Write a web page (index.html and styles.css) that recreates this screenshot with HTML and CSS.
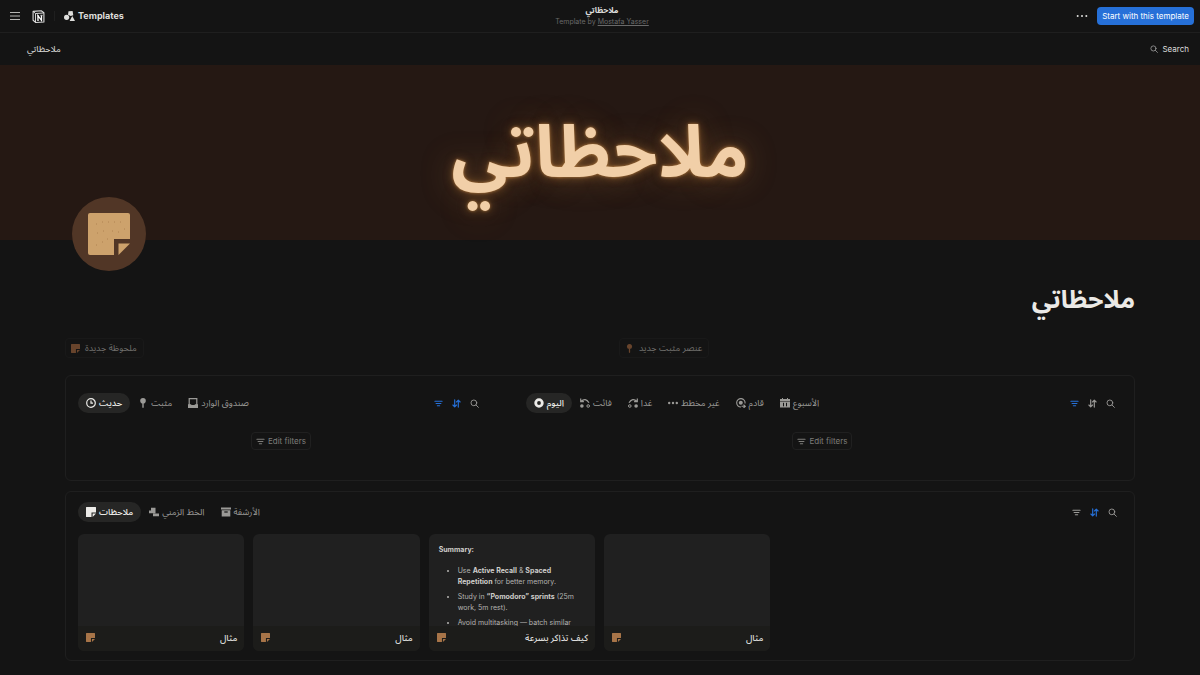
FILE: index.html
```
<!DOCTYPE html>
<html lang="en">
<head>
    <meta charset="UTF-8">
    <meta name="viewport" content="width=device-width, initial-scale=1.0">
    <title>ملاحظاتي</title>
    <link rel="stylesheet" href="styles.css">
</head>
<body>

    <!-- Shared icons -->
    <svg class="sprite" aria-hidden="true">
        <symbol id="i-note" viewBox="0 0 10 10"><path d="M.5 0h9q.5 0 .5.500V5.500H5.500v4.500H.5Q0 10 0 9.500v-9Q0 0 .5 0zM6.600 6.600H10L6.600 10z"/></symbol>
        <symbol id="i-pin" viewBox="0 0 10 10"><circle cx="5" cy="2.800" r="2.800"/><path d="M4.300 5h1.400v4.500L5 10l-.7-.5z"/></symbol>
        <symbol id="i-filter" viewBox="0 0 10 10"><path d="M1 2.500h8M2.300 5h5.400M3.700 7.500h2.600" fill="none" stroke="currentColor" stroke-width="1.200" stroke-linecap="round"/></symbol>
        <symbol id="i-sort" viewBox="0 0 10 10"><path d="M3 1v7.500M1 6.700l2 2 2-2M7 9V1.500M5 3.300l2-2 2 2" fill="none" stroke="currentColor" stroke-width="1.300" stroke-linecap="round" stroke-linejoin="round"/></symbol>
        <symbol id="i-search" viewBox="0 0 10 10"><path d="M7.500 4.300a3.200 3.200 0 1 1-6.400 0 3.200 3.200 0 0 1 6.400 0zM6.700 6.700L9.300 9.300" fill="none" stroke="currentColor" stroke-linecap="round"/></symbol>
    </svg>

    <header class="topbar">
        <div class="topbar-left">
            <button class="icon-btn" aria-label="Menu">
                <svg class="icon-menu" viewBox="0 0 10 8"><path d="M0 .5h10M0 4h10M0 7.500h10" fill="none" stroke="currentColor" stroke-width=".8"/></svg>
            </button>
            <a class="brand" href="#" aria-label="Home">
                <svg class="icon-brand" viewBox="0 0 24 24">
                    <path d="M2 2.500L17 1.500l5 3.500v17l-15 1-5-4z" fill="#141414" stroke="#dcdcdc" stroke-width="2" stroke-linejoin="round"/>
                    <path d="M2 2.500L6.500 6.500 22 5.500M6.500 6.500V23" fill="none" stroke="#dcdcdc" stroke-width="1.800"/>
                    <path d="M11 19v-8.500l6.500 8.500v-9" fill="none" stroke="#fff" stroke-width="2.400"/>
                    <path d="M9.500 10.500h3M15.500 9.800h4M9.500 19.300h3.200" fill="none" stroke="#fff" stroke-width="1.400"/>
                </svg>
            </a>
            <span class="divider"></span>
            <a class="templates" href="#">
                <svg class="icon-shapes" viewBox="0 0 11 10"><path d="M4.500.3L8.600 0l.7 4.200-2.600.9L4 3.800z"/><circle cx="2.600" cy="6.300" r="2.600"/><path d="M8.300 5l2.700 5H5.600z"/></svg>
                Templates
            </a>
        </div>
        <div class="topbar-title">
            <div class="doc-name">ملاحظاتي</div>
            <div class="doc-author">Template by <a href="#">Mostafa Yasser</a></div>
        </div>
        <div class="topbar-right">
            <button class="icon-btn" aria-label="More">
                <svg class="icon-dots" viewBox="0 0 12 10"><circle cx="1.700" cy="5" r="1"/><circle cx="6" cy="5" r="1"/><circle cx="10.300" cy="5" r="1"/></svg>
            </button>
            <button class="start-btn">Start with this template</button>
        </div>
    </header>

    <nav class="crumbs">
        <a href="#">ملاحظاتي</a>
        <button class="search-btn"><svg class="icon-small"><use href="#i-search"/></svg>Search</button>
    </nav>

    <div class="cover" lang="ar">ملاحظاتي</div>

    <main class="page">
        <div class="page-icon">
            <svg class="icon-page" viewBox="0 0 42 42">
                <path d="M2 0h38q2 0 2 2v24H26v16H2q-2 0-2-2V2q0-2 2-2z"/>
                <path d="M30.500 30.500H42L30.500 42z"/>
                <path class="specks" d="M8 11h.8M14 9h.8M20 9h.8M26 9h.8M32 9h.8M9 20h.8M15 18h.8M24 18h.8M30 19h.8M36 16h.8M14 29h.8M19 26h.8M8 32h.8"/>
            </svg>
        </div>

        <h1 class="title" dir="rtl" lang="ar">ملاحظاتي</h1>

        <div class="actions">
            <div><button class="action-btn"><svg class="icon-tool brown"><use href="#i-note"/></svg>ملحوظة جديدة</button></div>
            <div><button class="action-btn"><svg class="icon-tool brown"><use href="#i-pin"/></svg>عنصر مثبت جديد</button></div>
        </div>

        <section class="panel panel-split">
            <div class="view">
                <div class="view-bar">
                    <div class="tabs">
                        <button class="tab active"><svg class="icon-tab" viewBox="0 0 10 10"><path d="M9.300 5A4.300 4.300 0 1 1 .7 5a4.300 4.300 0 0 1 8.600 0zM5 2.500V5.200h2" fill="none" stroke="currentColor" stroke-width="1.200"/></svg>حديث</button>
                        <button class="tab"><svg class="icon-tab" viewBox="0 0 10 10"><use href="#i-pin"/></svg>مثبت</button>
                        <button class="tab"><svg class="icon-tab" viewBox="0 0 10 10"><path d="M1.200.7h7.600v7H1.200z" fill="none" stroke="currentColor" stroke-width="1.200"/><path d="M0 6.300h3l1 1.400h2l1-1.400h3V10H0z"/></svg>صندوق الوارد</button>
                    </div>
                    <div class="tools">
                        <button class="icon-btn blue" aria-label="Filter"><svg class="icon-tool"><use href="#i-filter"/></svg></button>
                        <button class="icon-btn blue" aria-label="Sort"><svg class="icon-tool"><use href="#i-sort"/></svg></button>
                        <button class="icon-btn" aria-label="Search"><svg class="icon-tool"><use href="#i-search"/></svg></button>
                    </div>
                </div>
                <button class="edit-btn"><svg class="icon-tool"><use href="#i-filter"/></svg>Edit filters</button>
            </div>
            <div class="view">
                <div class="view-bar">
                    <div class="tabs">
                        <button class="tab active"><svg class="icon-tab" viewBox="0 0 10 10"><circle cx="5" cy="5" r="3.300" fill="none" stroke="currentColor" stroke-width="2.800"/></svg>اليوم</button>
                        <button class="tab"><svg class="icon-tab" viewBox="0 0 10 10"><path d="M1 3.500Q5.500-1 9 4.800M.7.500v3.200h3.200" fill="none" stroke="currentColor" stroke-width="1.200"/><circle cx="1.900" cy="8" r="1.800"/><circle cx="8.200" cy="8" r="1.300" fill="none" stroke="currentColor"/></svg>فائت</button>
                        <button class="tab"><svg class="icon-tab" viewBox="0 0 10 10"><path d="M9 3.500Q4.500-1 1 4.800M9.300.5v3.200H6.100" fill="none" stroke="currentColor" stroke-width="1.200"/><circle cx="8.100" cy="8" r="1.800"/><circle cx="1.800" cy="8" r="1.300" fill="none" stroke="currentColor"/></svg>غدا</button>
                        <button class="tab"><svg class="icon-tab" viewBox="0 0 10 10"><circle cx="1.200" cy="5" r="1.200"/><circle cx="5" cy="5" r="1.200"/><circle cx="8.800" cy="5" r="1.200"/></svg>غير مخطط</button>
                        <button class="tab"><svg class="icon-tab" viewBox="0 0 10 10"><path d="M9 5.500A4.200 4.200 0 1 0 5 9M5.500 8.300H9M7.500 6.600l1.800 1.700L7.500 10" fill="none" stroke="currentColor" stroke-width="1.100"/><circle cx="4.800" cy="4.800" r="2"/></svg>قادم</button>
                        <button class="tab"><svg class="icon-tab" viewBox="0 0 10 10"><path d="M0 1h2V0h1v1h4V0h1v1h2v2H0zM0 3.600h10V9.500H0z"/><path d="M3.500 4.800v3.500M6.500 4.800v3.500" fill="none" stroke="#141414"/></svg>الأسبوع</button>
                    </div>
                    <div class="tools">
                        <button class="icon-btn blue" aria-label="Filter"><svg class="icon-tool"><use href="#i-filter"/></svg></button>
                        <button class="icon-btn" aria-label="Sort"><svg class="icon-tool"><use href="#i-sort"/></svg></button>
                        <button class="icon-btn" aria-label="Search"><svg class="icon-tool"><use href="#i-search"/></svg></button>
                    </div>
                </div>
                <button class="edit-btn"><svg class="icon-tool"><use href="#i-filter"/></svg>Edit filters</button>
            </div>
        </section>

        <section class="panel panel-notes">
            <div class="view-bar">
                <div class="tabs">
                    <button class="tab active"><svg class="icon-tab"><use href="#i-note"/></svg>ملاحظات</button>
                    <button class="tab"><svg class="icon-tab" viewBox="0 0 10 10"><path d="M2 .8h4.500v2.700H2zM0 3.500h6.500v2.700H0zM4 6.500h6v2.700H4z"/></svg>الخط الزمني</button>
                    <button class="tab"><svg class="icon-tab" viewBox="0 0 10 10"><path d="M0 .5h10v2H0zM.7 3.300h8.600v6.200H.7z"/><path d="M3.300 5h3.400" stroke="#141414" stroke-width="1.200"/></svg>الأرشفة</button>
                </div>
                <div class="tools">
                    <button class="icon-btn" aria-label="Filter"><svg class="icon-tool"><use href="#i-filter"/></svg></button>
                    <button class="icon-btn blue" aria-label="Sort"><svg class="icon-tool"><use href="#i-sort"/></svg></button>
                    <button class="icon-btn" aria-label="Search"><svg class="icon-tool"><use href="#i-search"/></svg></button>
                </div>
            </div>
            <div class="cards">
                <article class="card">
                    <div class="preview"></div>
                    <div class="card-foot"><svg class="icon-tool copper"><use href="#i-note"/></svg><span>مثال</span></div>
                </article>
                <article class="card">
                    <div class="preview"></div>
                    <div class="card-foot"><svg class="icon-tool copper"><use href="#i-note"/></svg><span>مثال</span></div>
                </article>
                <article class="card">
                    <div class="preview">
                        <p><b>Summary:</b></p>
                        <ul>
                            <li>Use <b>Active Recall</b> &amp; <b>Spaced Repetition</b> for better memory.</li>
                            <li>Study in <b>“Pomodoro” sprints</b> (25m work, 5m rest).</li>
                            <li>Avoid multitasking — batch similar</li>
                        </ul>
                    </div>
                    <div class="card-foot"><svg class="icon-tool copper"><use href="#i-note"/></svg><span>كيف تذاكر بسرعة</span></div>
                </article>
                <article class="card">
                    <div class="preview"></div>
                    <div class="card-foot"><svg class="icon-tool copper"><use href="#i-note"/></svg><span>مثال</span></div>
                </article>
            </div>
        </section>
    </main>

</body>
</html>
```
FILE: styles.css
```
* {
    box-sizing: border-box;
}
body {
    margin: 0;
    background: #141414;
    color: #dededc;
    font-family: Inter, "Noto Sans Arabic", "DejaVu Sans", sans-serif;
    font-size: 8px;
    line-height: 12px;
}
button {
    display: inline-flex;
    align-items: center;
    padding: 0;
    border: none;
    background: none;
    color: inherit;
    font: inherit;
    white-space: nowrap;
    cursor: pointer;
}
a {
    color: inherit;
    text-decoration: none;
}
svg {
    display: block;
    flex: none;
    fill: currentColor;
}
.sprite {
    position: absolute;
    width: 0;
    height: 0;
}

/* Top bar */
.topbar {
    display: grid;
    grid-template-columns: 1fr auto 1fr;
    align-items: center;
    height: 33px;
    padding: 0 6px 0 10px;
    border-bottom: 1px solid #1f1f1f;
}
.topbar-left,
.topbar-right {
    display: flex;
    align-items: center;
}
.topbar-right {
    justify-content: flex-end;
    gap: 9px;
}
.icon-menu {
    width: 10px;
    height: 8px;
}
.icon-brand {
    width: 13px;
    height: 13px;
    margin-left: 12px;
}
.divider {
    width: 1px;
    height: 10px;
    margin: 0 9px;
    background: #1f1f1f;
}
.templates {
    display: flex;
    align-items: center;
    gap: 3px;
    font-size: 9px;
    font-weight: bold;
}
.icon-shapes {
    width: 11px;
    height: 10px;
}
.icon-dots {
    width: 12px;
    height: 10px;
}
.topbar-title {
    text-align: center;
}
.doc-name {
    font-weight: bold;
}
.doc-author {
    color: #696969;
    font-size: 7px;
}
.doc-author a {
    text-decoration: underline;
}
.start-btn {
    height: 18px;
    padding: 0 5px;
    border-radius: 4px;
    background: #2670d8;
    color: #fff;
}

/* Breadcrumbs */
.crumbs {
    display: flex;
    align-items: center;
    justify-content: space-between;
    height: 32px;
    padding: 0 11px 0 27px;
}
.crumbs a {
    font-size: 9px;
}
.search-btn {
    gap: 4px;
}
.icon-small {
    width: 8px;
    height: 8px;
    color: #a0a0a0;
}

/* Cover with the glowing name */
.cover {
    display: flex;
    align-items: center;
    justify-content: center;
    height: 175px;
    padding-bottom: 4px;
    background: #251813;
    color: #f1cfa8;
    font-size: 72px;
    font-weight: bold;
    line-height: 80px;
    text-shadow: 0 0 3px #b07a40, 0 0 10px rgba(190, 125, 60, 0.5), 0 0 32px rgba(190, 125, 60, 0.4);
}

/* Page */
.page {
    padding: 0 65px 14px;
}
.page-icon {
    position: relative;
    display: flex;
    align-items: center;
    justify-content: center;
    width: 74px;
    height: 74px;
    margin: -43px 0 0 7px;
    border-radius: 50%;
    background: #513626;
    color: #cda26c;
}
.icon-page {
    width: 42px;
    height: 42px;
}
.specks {
    fill: none;
    stroke: #a97c4c;
    stroke-width: 1;
}
.title {
    margin: 8px 0 19px;
    color: #ebe9e6;
    font-size: 25px;
    line-height: 40px;
}
.actions {
    display: grid;
    grid-template-columns: 1fr 1fr;
    gap: 38px;
}
.action-btn {
    gap: 5px;
    height: 20px;
    padding: 0 6px 0 5px;
    border: 1px solid #191919;
    border-radius: 4px;
    color: #72716e;
    font-size: 9px;
}
.actions > div {
    display: flex;
}
.icon-tab {
    width: 10px;
    height: 10px;
}
.icon-tool {
    width: 9px;
    height: 9px;
}
.brown {
    color: #68442c;
}
.copper {
    color: #a77448;
}

/* Panels */
.panel {
    border: 1px solid #1f1f1f;
    border-radius: 6px;
}
.panel-split {
    display: grid;
    grid-template-columns: 13fr 19fr;
    gap: 42px;
    margin-top: 17px;
    padding: 17px 15px 30px 12px;
}
.panel-notes {
    margin-top: 10px;
    padding: 10px 13px 9px 12px;
}
.view {
    display: flex;
    flex-direction: column;
    align-items: center;
    gap: 19px;
}
.view-bar {
    display: flex;
    align-items: center;
    justify-content: space-between;
    width: 100%;
}
.tabs,
.tools {
    display: flex;
}
.tab {
    gap: 3px;
    height: 20px;
    padding: 0 8px;
    border-radius: 10px;
    color: #9b9a97;
    font-size: 9px;
}
.tab.active {
    background: #262625;
    color: #ecebe8;
    font-weight: 500;
}
.tools {
    color: #9b9a97;
}
.tools .icon-btn {
    justify-content: center;
    width: 18px;
    height: 18px;
}
.tools .blue {
    color: #2670d8;
}
.edit-btn {
    gap: 3px;
    height: 18px;
    padding: 0 4px;
    border: 1px solid #202020;
    border-radius: 4px;
    color: #7d7c79;
}

/* Note cards */
.cards {
    display: grid;
    grid-template-columns: repeat(auto-fill, minmax(160px, 1fr));
    gap: 9px;
    margin-top: 12px;
}
.card {
    overflow: hidden;
    border-radius: 6px;
    background: #202020;
}
.preview {
    height: 92px;
    padding: 10px;
    overflow: hidden;
    color: #b4b3b0;
    font-size: 7px;
    line-height: 11px;
}
.preview b {
    color: #cfcecb;
}
.preview p {
    margin: 0 0 10px;
}
.preview ul {
    margin: 0;
    padding-left: 19px;
}
.preview li {
    margin-bottom: 4px;
}
.card-foot {
    display: flex;
    align-items: center;
    justify-content: space-between;
    height: 25px;
    padding: 0 7px 2px 8px;
    background: #1c1c1a;
    font-size: 9px;
    font-weight: 500;
}
```
